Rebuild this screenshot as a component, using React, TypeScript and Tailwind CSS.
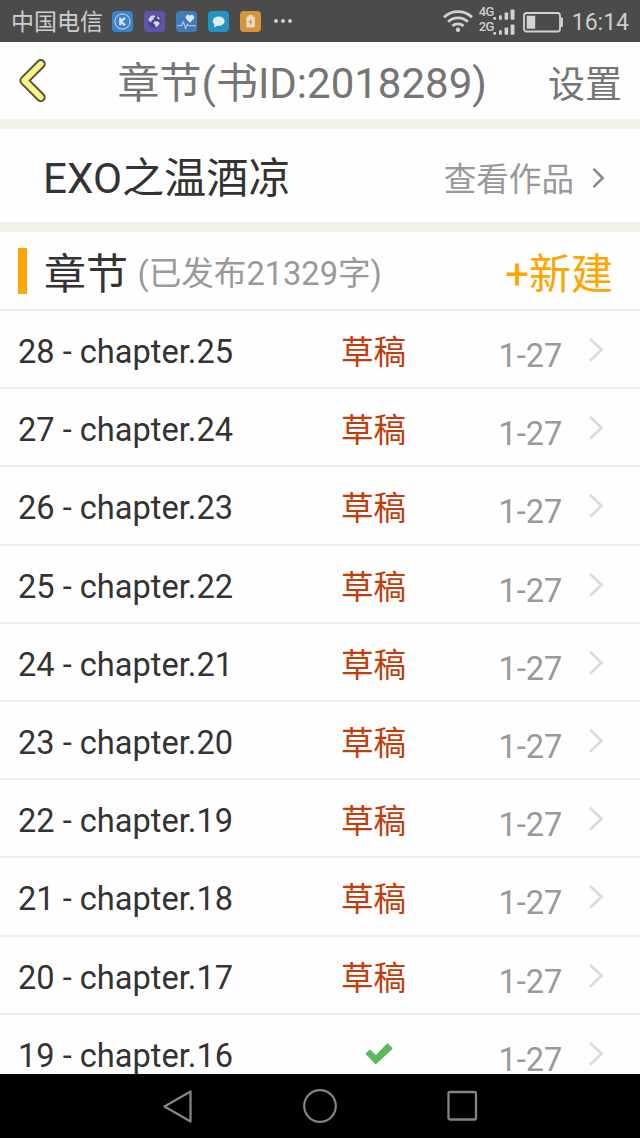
import React from 'react';

interface Chapter {
  index: number;
  title: string;
  date: string;
  published?: boolean;
}

const CHAPTERS: Chapter[] = [
  { index: 28, title: 'chapter.25', date: '1-27' },
  { index: 27, title: 'chapter.24', date: '1-27' },
  { index: 26, title: 'chapter.23', date: '1-27' },
  { index: 25, title: 'chapter.22', date: '1-27' },
  { index: 24, title: 'chapter.21', date: '1-27' },
  { index: 23, title: 'chapter.20', date: '1-27' },
  { index: 22, title: 'chapter.19', date: '1-27' },
  { index: 21, title: 'chapter.18', date: '1-27' },
  { index: 20, title: 'chapter.17', date: '1-27' },
  { index: 19, title: 'chapter.16', date: '1-27', published: true },
];

const SignalBars: React.FC = () => (
  <svg width="22" height="11" viewBox="0 0 22 11" fill="#d2d2d2">
    <rect x="0.3" y="8" width="2.8" height="2.8" rx="0.8" />
    <rect x="6" y="6.2" width="2.8" height="4.6" rx="0.8" />
    <rect x="11.6" y="3.4" width="3.6" height="7.4" rx="0.8" />
    <rect x="17.6" y="0.4" width="3.9" height="10.4" rx="0.8" />
  </svg>
);

const StatusBar: React.FC = () => (
  <div className="flex h-[42px] shrink-0 items-center justify-between bg-[#4b4b4b] pr-[11px] pl-[11px] text-[#cdcdcd]">
    <div className="flex items-center">
      <span className="w-[101px] pt-[4px] text-[23px] leading-[38px] whitespace-nowrap">中国电信</span>
      <div className="flex items-center gap-[11px]">
        <svg width="21" height="21" viewBox="0 0 21 21">
          <rect width="21" height="21" rx="4" fill="#3b82c9" />
          <circle cx="10.5" cy="10.5" r="7.6" fill="none" stroke="#d5dfe8" strokeWidth="1" />
          <path d="M8.3 6.8v7.4M13 6.8l-4 3.7 4 3.7" fill="none" stroke="#e2e8ee" strokeWidth="2.2" />
        </svg>
        <svg width="21" height="21" viewBox="0 0 21 21">
          <rect width="21" height="21" rx="4" fill="#5d54ac" />
          <circle cx="10.5" cy="10.5" r="6.6" fill="#4b4496" />
          <path d="M4.2 8.5 7 4.7l3.5-.5.7 1.6-2 1.4.6 1.3-2.5 1 .4 1.6-2-.4zM10 10.5l3.5-.3 2.3 1.8-1.4 2.4-2.6 2.2-.5-2.6-2-1.7zM12.8 5.2l2.3 1.3.9 2-2.4-.8z" fill="#dcdaea" />
        </svg>
        <svg width="21" height="21" viewBox="0 0 21 21">
          <rect width="21" height="21" rx="4" fill="#3f7cb8" />
          <path d="M13.9 11.8 10.2 8a2.4 2.4 0 0 1 3.7-3.2A2.4 2.4 0 0 1 17.6 8z" fill="#e1e6ea" />
          <path d="M1 14.8h4.2l2.2-4 2.3 6.6 1.6-4.2 1.8 1.6H20" fill="none" stroke="#b8cfe2" strokeWidth="1.1" />
        </svg>
        <svg width="21" height="21" viewBox="0 0 21 21">
          <rect width="21" height="21" rx="4" fill="#2393c3" />
          <ellipse cx="10.7" cy="10.2" rx="5.9" ry="4.8" fill="#e5ebee" />
          <path d="M6.5 12.5 6 16.5l4-2z" fill="#e5ebee" />
        </svg>
        <svg width="21" height="21" viewBox="0 0 21 21">
          <rect width="21" height="21" rx="4" fill="#d59539" />
          <rect x="8.7" y="4" width="3.8" height="2.2" fill="#e5dccd" />
          <rect x="6.4" y="5.6" width="8.4" height="11" rx="1.2" fill="#e5dccd" />
          <path d="m11.3 7.6-3 4h2l-.5 3.2 3-4.2h-2z" fill="#d59539" />
        </svg>
      </div>
      <div className="ml-[13px] flex gap-[3.5px]">
        <span className="size-[3.5px] rounded-full bg-[#cdcdcd]" />
        <span className="size-[3.5px] rounded-full bg-[#cdcdcd]" />
        <span className="size-[3.5px] rounded-full bg-[#cdcdcd]" />
      </div>
    </div>

    <div className="flex items-center">
      <svg width="30" height="24" viewBox="0 0 30 24" fill="none" stroke="#d2d2d2" strokeWidth="2.8">
        <path d="M1 8.2a20.5 20.5 0 0 1 28 0" />
        <path d="M5.2 12.7a14.4 14.4 0 0 1 19.6 0" />
        <path d="M9.4 17a8.4 8.4 0 0 1 11.2 0" />
        <circle cx="15" cy="20.8" r="2.2" fill="#d2d2d2" stroke="none" />
      </svg>
      <div className="mb-[2px] ml-[6px] flex w-[36px] flex-col text-[13px] leading-[12px] font-medium">
        <div className="flex h-[15px] items-end">
          <span className="w-[14px] pb-[2px] tracking-[-0.7px]">4G</span>
          <SignalBars />
        </div>
        <div className="flex h-[15px] items-end">
          <span className="w-[14px] pb-[2px] tracking-[-0.7px]">2G</span>
          <SignalBars />
        </div>
      </div>
      <svg className="mt-[2px] ml-[8px]" width="41" height="21" viewBox="0 0 41 21">
        <rect x="1" y="1" width="36" height="18.5" rx="2.5" fill="none" stroke="#d2d2d2" strokeWidth="1.8" />
        <rect x="3.7" y="3.7" width="8.5" height="13" fill="#d2d2d2" />
        <path d="M37.5 5.5h1.2q1.2 0 1.2 1.2v7q0 1.2-1.2 1.2h-1.2z" fill="#d2d2d2" />
      </svg>
      <span className="ml-[8px] pt-[4px] text-[23px] leading-[38px]">16:14</span>
    </div>
  </div>
);

const Header: React.FC = () => (
  <header className="flex h-[77px] shrink-0 items-center bg-[#fefefe] px-[18px] text-[#757575]">
    <button className="w-[99.5px]">
      <svg className="mt-px" width="30" height="46" viewBox="0 0 30 46" fill="none" strokeLinecap="round" strokeLinejoin="round">
        <path d="M22.8 6 6.2 22.6 22.8 39.3" stroke="#55534a" strokeWidth="9.8" />
        <path d="M22.8 6 6.2 22.6 22.8 39.3" stroke="#fbf283" strokeWidth="5.8" />
      </svg>
    </button>
    <h1 className="pt-[7px] text-[42px] leading-[70px] whitespace-nowrap">章节(书ID:2018289)</h1>
    <button className="ml-auto pt-[10px] text-[37px] leading-[67px] whitespace-nowrap">设置</button>
  </header>
);

const ChapterRow: React.FC<{ chapter: Chapter }> = ({ chapter }) => (
  <li className="flex h-[78.2px] shrink-0 border-t-2 border-[#efefef] pl-[18px] leading-[82px]">
    <span className="w-[323px] text-[32.6px] text-[#333333]">
      {chapter.index} - {chapter.title}
    </span>
    <span className="flex w-[157.5px] pt-px text-[32.6px] text-[#c23c0c]">
      {chapter.published ? (
        <svg className="mt-[25px] ml-[22.5px]" width="30" height="24" viewBox="0 0 30 24">
          <path
            d="M2 12.2 5.1 9q.7-.6 1.4 0l5.3 5L22.8 2.8q.7-.6 1.4 0l4 4q.6.7 0 1.4L12.5 22.8q-.7.6-1.4 0L2 13.6q-.6-.7 0-1.4z"
            fill="#5cb85c"
          />
        </svg>
      ) : (
        '草稿'
      )}
    </span>
    <span className="w-[89.5px] pt-[4px] text-[32.6px] text-[#999999]">{chapter.date}</span>
    <svg className="mt-[26px]" width="16" height="26" viewBox="0 0 16 26">
      <path d="M2 1.8 13.5 12.8 2 23.8" fill="none" stroke="#dadada" strokeWidth="2.6" />
    </svg>
  </li>
);

const NavBar: React.FC = () => (
  <nav className="flex h-[64px] shrink-0 items-center justify-center gap-[109px] bg-black">
    <svg width="32" height="36" viewBox="0 0 32 36" fill="none" stroke="#858585" strokeWidth="2.3" strokeLinejoin="round">
      <path d="M28.5 3.5v30L2.5 18.5z" />
    </svg>
    <svg width="34" height="36" viewBox="0 0 34 36" fill="none" stroke="#858585" strokeWidth="2.2">
      <circle cx="17" cy="18" r="15.8" />
    </svg>
    <svg width="32" height="36" viewBox="0 0 32 36" fill="none" stroke="#858585" strokeWidth="2.3">
      <rect x="2.5" y="4" width="27.5" height="27.5" rx="1.5" />
    </svg>
  </nav>
);

const App: React.FC = () => {
  return (
    <div className="flex h-[1138px] w-[640px] flex-col overflow-hidden bg-[#fefefe] font-[Roboto,'Noto_Sans_CJK_SC',sans-serif]">
      <StatusBar />
      <Header />
      <main className="flex min-h-0 flex-1 flex-col overflow-hidden">
        <section className="flex h-[103px] shrink-0 items-center border-t-[10px] border-[#f1f1ec] pr-[34px] pl-[43px]">
          <h2 className="pt-[7px] text-[42.2px] leading-[86px] text-[#333333]">EXO之温酒凉</h2>
          <a className="ml-auto flex items-center text-[32.6px] text-[#999999]">
            <span className="pt-[10px] leading-[83px]">查看作品</span>
            <svg className="mt-[4px] ml-[18px]" width="14" height="22" viewBox="0 0 14 22">
              <path d="M1.5 1.8 10.7 11 1.5 20.2" fill="none" stroke="#8a8a8a" strokeWidth="2.6" />
            </svg>
          </a>
        </section>
        <section className="flex h-[87px] shrink-0 items-center border-t-[10px] border-[#f1f1ec] pr-[27px] pl-[18px]">
          <span className="h-[46px] w-[9px] bg-[#ffa500]" />
          <h2 className="ml-[17px] pt-[8px] text-[42px] leading-[69px] text-[#333333]">章节</h2>
          <span className="ml-[9.5px] pt-[8px] text-[32.6px] leading-[69px] text-[#999999]">(已发布21329字)</span>
          <button className="ml-auto pt-[8px] text-[42px] leading-[69px] text-[#ffa500]">+新建</button>
        </section>
        <ul className="flex flex-col">
          {CHAPTERS.map(chapter => (
            <ChapterRow key={chapter.index} chapter={chapter} />
          ))}
        </ul>
      </main>
      <NavBar />
    </div>
  );
};

export default App;
